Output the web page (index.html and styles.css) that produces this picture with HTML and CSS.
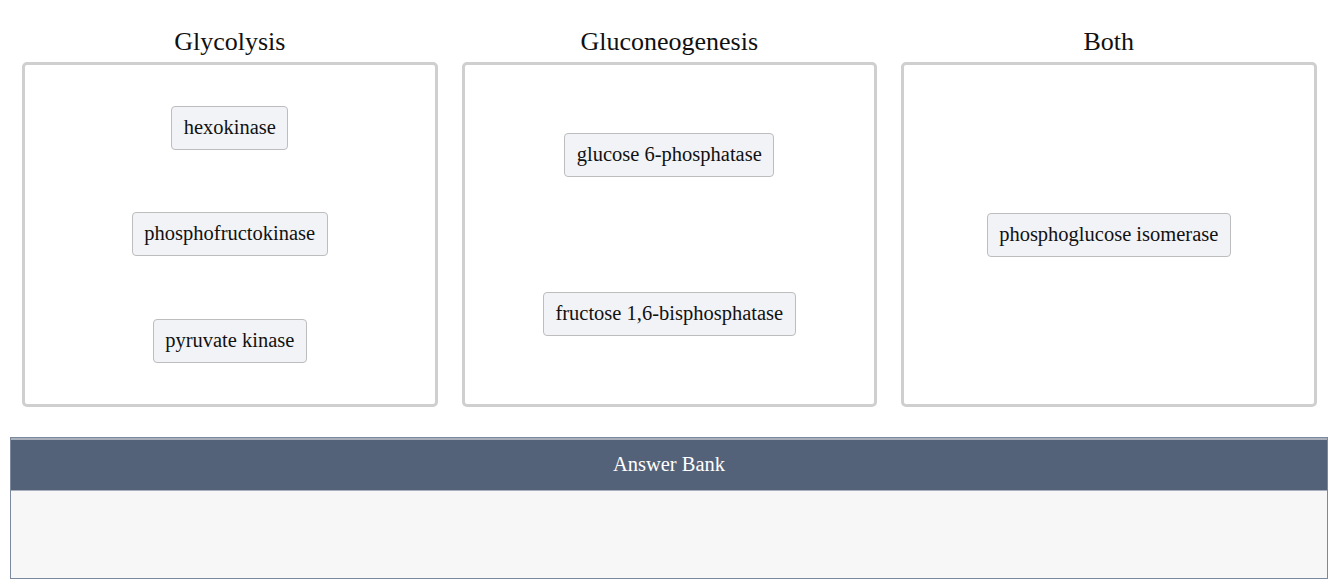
FILE: index.html
```html
<!DOCTYPE html>
<html lang="en">
<head>
<meta charset="utf-8">
<title>Glycolysis vs Gluconeogenesis</title>
<link rel="stylesheet" href="styles.css">
</head>
<body>
<div class="page">
  <div class="columns">
    <section class="column">
      <h2 class="col-title">Glycolysis</h2>
      <div class="drop-box">
        <div class="chip">hexokinase</div>
        <div class="chip">phosphofructokinase</div>
        <div class="chip">pyruvate kinase</div>
      </div>
    </section>
    <section class="column">
      <h2 class="col-title">Gluconeogenesis</h2>
      <div class="drop-box">
        <div class="chip">glucose 6-phosphatase</div>
        <div class="chip">fructose 1,6-bisphosphatase</div>
      </div>
    </section>
    <section class="column">
      <h2 class="col-title">Both</h2>
      <div class="drop-box">
        <div class="chip">phosphoglucose isomerase</div>
      </div>
    </section>
  </div>
  <div class="bank">
    <div class="bank-header">Answer Bank</div>
    <div class="bank-body"></div>
  </div>
</div>
</body>
</html>
```
FILE: styles.css
```css
html, body {
  margin: 0;
  padding: 0;
  background: #ffffff;
}

body {
  font-family: "Liberation Serif", "Times New Roman", serif;
  color: #111111;
}

.page {
  width: 1334px;
  height: 587px;
  overflow: hidden;
}

.columns {
  display: flex;
  gap: 24px;
  padding: 27px 16px 0 22px;
}

.column {
  flex: 0 0 415.5px;
  display: flex;
  flex-direction: column;
  align-items: stretch;
}

.col-title {
  margin: 0 0 5px 0;
  font-size: 26px;
  line-height: 30px;
  font-weight: normal;
  text-align: center;
  color: #111111;
}

.drop-box {
  box-sizing: border-box;
  height: 345px;
  border: 3px solid #cfcfcf;
  border-radius: 5px;
  padding: 10px;
  display: flex;
  flex-direction: column;
  align-items: center;
  justify-content: space-around;
  background: #ffffff;
}

.chip {
  box-sizing: border-box;
  height: 44px;
  padding: 8px 11.5px 10px;
  font-size: 20.5px;
  line-height: 24px;
  white-space: nowrap;
  background: #f2f3f7;
  border: 1px solid #bdbdbd;
  border-radius: 4px;
  color: #111111;
}

.bank {
  box-sizing: border-box;
  margin: 30px 6px 0 10px;
  height: 142px;
  border: 1px solid #7b889d;
  display: flex;
  flex-direction: column;
}

.bank-header {
  box-sizing: border-box;
  height: 53px;
  background: #546279;
  border-top: 2px solid #a9b0bc;
  border-bottom: 1px solid #a9b0bc;
  color: #ffffff;
  font-size: 20.5px;
  line-height: 24px;
  display: flex;
  align-items: center;
  justify-content: center;
  padding-bottom: 3px;
}

.bank-body {
  flex: 1;
  background: #f7f7f7;
}
```
